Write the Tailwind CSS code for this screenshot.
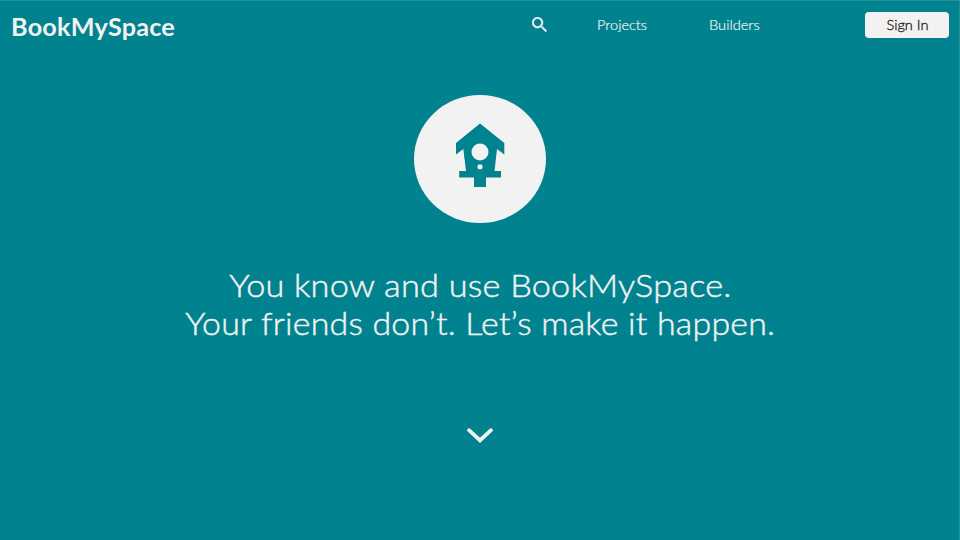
<!DOCTYPE html>
<html lang="en">
<head>
<meta charset="utf-8">
<title>BookMySpace</title>
<script src="https://cdn.jsdelivr.net/npm/@tailwindcss/browser@4"></script>
</head>
<body class="h-[540px] w-[960px] overflow-hidden border-t border-r border-[#20929c] bg-[#00838f] font-['Lato','Open_Sans',sans-serif] text-[#f2f2f2]">
<header class="flex h-[48px] items-center pl-[11px] pr-[10px]">
  <h1 class="w-[521px] text-[24px] leading-[30px] font-bold tracking-[0.2px] whitespace-nowrap pt-[4px]"><span class="inline-block origin-left scale-x-[1.05]">BookMySpace</span></h1>
  <button class="h-[15px] w-[15px] shrink-0 -mt-px" aria-label="Search">
    <svg class="block" width="15" height="15" viewBox="3 3 17.5 17.5" fill="#f2f2f2" stroke="#f2f2f2" stroke-width=".35"><path d="M15.5 14h-.79l-.28-.27A6.47 6.47 0 0 0 16 9.5 6.5 6.5 0 1 0 9.5 16c1.61 0 3.09-.59 4.23-1.57l.27.28v.79l5 4.99L20.49 19l-4.99-5zm-6 0C7.01 14 5 11.99 5 9.5S7.01 5 9.5 5 14 7.01 14 9.5 11.99 14 9.5 14z"/></svg>
  </button>
  <nav class="flex pl-[50px] text-[13.5px] leading-5 font-light [-webkit-text-stroke:0.2px_#f2f2f2]">
    <a class="w-[112px]"><span class="inline-block origin-left scale-x-[1.08]">Projects</span></a><a><span class="inline-block origin-left scale-x-[1.085]">Builders</span></a>
  </nav>
  <button class="ml-auto h-[26.5px] w-[84px] rounded-[4px] bg-[#f2f2f2] text-[13.5px] font-light text-[#212121] [-webkit-text-stroke:0.3px_#212121]"><span class="inline-block scale-x-[1.08]">Sign In</span></button>
</header>
<main class="flex flex-col items-center pl-px">
  <div class="mt-[46px] flex h-[128px] w-[132px] justify-center rounded-[50%] bg-[#f2f2f2] pt-[28px]">
    <svg width="50" height="64" viewBox="0 0 50 64"><path fill="#00838f" d="M25 .5 49.300 20V31.500L42 26 39.500 48H46V54.500H31V64H19V54.500H4.200V48H11L8.300 26 1 31.500V20Z"/><circle cx="25" cy="29" r="8.500" fill="#f2f2f2"/><circle cx="25" cy="43.800" r="2.600" fill="#f2f2f2"/></svg>
  </div>
  <p class="mt-[43px] flex flex-col items-center text-[32px] leading-[38px] font-light tracking-[0.2px] whitespace-nowrap [-webkit-text-stroke:0.45px_#f2f2f2]"><span class="scale-x-[1.072]">You know and use BookMySpace.</span><span class="scale-x-[1.06]">Your friends don’t. Let’s make it happen.</span></p>
  <svg class="mt-[85px]" width="28" height="17" viewBox="0 0 28 17" fill="none" stroke="#f2f2f2" stroke-width="3.800" stroke-linecap="round"><path d="M3 3.200 14 13.500 25 3.200"/></svg>
</main>
</body>
</html>
